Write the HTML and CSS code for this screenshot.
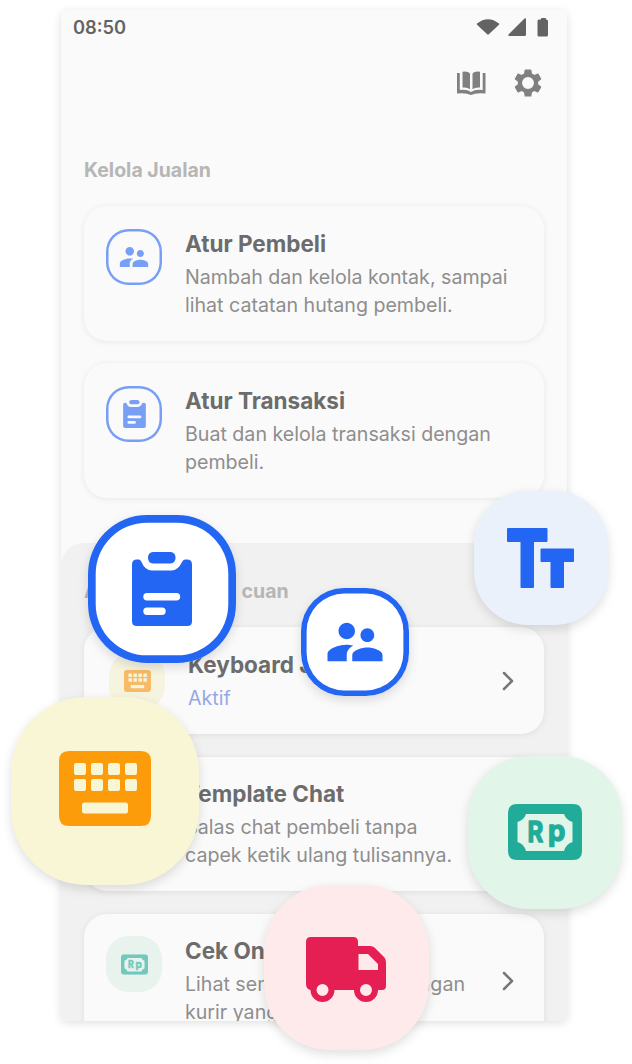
FILE: index.html
```html
<!DOCTYPE html>
<html lang="id">
<head>
<meta charset="utf-8">
<title>Kelola Jualan</title>
<link rel="stylesheet" href="styles.css">
</head>
<body>
<svg class="defs" aria-hidden="true">
  <symbol id="people" viewBox="0 0 24 24"><path d="M16.5 12c1.38 0 2.49-1.12 2.49-2.5S17.88 7 16.5 7C15.12 7 14 8.12 14 9.5s1.12 2.5 2.5 2.5zM9 11c1.66 0 2.99-1.34 2.99-3S10.66 5 9 5C7.34 5 6 6.34 6 8s1.34 3 3 3zm7.5 3c-1.83 0-5.5.92-5.5 2.75V19h11v-2.25c0-1.83-3.67-2.75-5.5-2.75zM9 13c-2.33 0-7 1.17-7 3.5V19h7v-2.25c0-.85.33-2.34 2.37-3.47C10.5 13.1 9.66 13 9 13z"/></symbol>
  <symbol id="clipboard" viewBox="0 0 60 74"><path fill-rule="evenodd" d="M21 0H38.500a5.800 5.800 0 0 1 0 11.500H21a5.800 5.800 0 0 1 0-11.500zM5 7.500H7Q8.500 7.500 9.500 10Q13 18.500 20 18.500H39.500Q46 18.500 50 10Q51 7.500 53 7.500H55Q60 7.500 60 12.500V69.500Q60 74 55 74H5Q0 74 0 69.500V12.500Q0 7.500 5 7.500zM15 41a3.700 3.700 0 0 0 0 7.400H44.500a3.700 3.700 0 0 0 0-7.400zM15 55.500a3.700 3.700 0 0 0 0 7.400H30a3.700 3.700 0 0 0 0-7.400z"/></symbol>
  <symbol id="keyboard" viewBox="0 0 92 75"><path fill-rule="evenodd" d="M10 0H82Q92 0 92 10V65Q92 75 82 75H10Q0 75 0 65V10Q0 0 10 0zM17 12a2 2 0 0 0-2 2v8a2 2 0 0 0 2 2h8a2 2 0 0 0 2-2v-8a2 2 0 0 0-2-2zM34 12a2 2 0 0 0-2 2v8a2 2 0 0 0 2 2h8a2 2 0 0 0 2-2v-8a2 2 0 0 0-2-2zM51 12a2 2 0 0 0-2 2v8a2 2 0 0 0 2 2h8a2 2 0 0 0 2-2v-8a2 2 0 0 0-2-2zM68 12a2 2 0 0 0-2 2v8a2 2 0 0 0 2 2h8a2 2 0 0 0 2-2v-8a2 2 0 0 0-2-2zM17 28a2 2 0 0 0-2 2v8a2 2 0 0 0 2 2h8a2 2 0 0 0 2-2v-8a2 2 0 0 0-2-2zM34 28a2 2 0 0 0-2 2v8a2 2 0 0 0 2 2h8a2 2 0 0 0 2-2v-8a2 2 0 0 0-2-2zM51 28a2 2 0 0 0-2 2v8a2 2 0 0 0 2 2h8a2 2 0 0 0 2-2v-8a2 2 0 0 0-2-2zM68 28a2 2 0 0 0-2 2v8a2 2 0 0 0 2 2h8a2 2 0 0 0 2-2v-8a2 2 0 0 0-2-2zM25.500 51.500a2.500 2.500 0 0 0-2.500 2.500v6a2.500 2.500 0 0 0 2.500 2.500h41a2.500 2.500 0 0 0 2.500-2.500v-6a2.500 2.500 0 0 0-2.500-2.500z"/></symbol>
  <symbol id="note" viewBox="0 0 74 56"><path fill-rule="evenodd" d="M9 0H65Q74 0 74 9V47Q74 56 65 56H9Q0 56 0 47V9Q0 0 9 0zM18 10Q16 16 9.500 18V38Q16 40 18 47H56Q58 40 64.500 38V18Q58 16 56 10z"/></symbol>
</svg>
<div class="stage">
  <main class="phone">
    <header class="status">
      <span>08:50</span>
      <svg width="74" height="22" viewBox="0 0 74 22"><path d="M1 7.500Q12-1 23 7.500Q23.500 8 23 8.800L12.500 18.500Q12 19 11.500 18.500L1 8.800Q.5 8 1 7.500zM48.500 2.500Q50 1.500 50 3.500V18.500Q50 20 48.500 20H33.500Q31.500 20 32.500 18.500zM65 3V2.500Q65 2 66 2h3q1 0 1 .7V3.500h.5q1.500 0 1.500 1.500V19q0 1.500-1.500 1.500h-7.500Q61.500 20.500 61.500 19V5q0-1.500 1.500-1.500H65z"/></svg>
    </header>
    <div class="toolbar">
      <svg width="30" height="25" viewBox="0 0 30 25"><path d="M1 2H3.800V19Q11 18 15 21Q19 18 26.700 19V2H29.500V22.500Q20 21.500 15 24Q10 21.500 1 22.500zM6.500.8Q12 0 14 2.500V18.300Q11.500 16 6.500 16.500zM24 .8Q18.500 0 16.500 2.500V18.300Q19 16 24 16.500z"/></svg>
      <svg width="34" height="34" viewBox="0 0 24 24"><path d="M19.140 12.940c.04-.3.06-.61.06-.94 0-.32-.02-.64-.07-.94l2.030-1.580c.18-.14.23-.41.12-.61l-1.920-3.320c-.12-.22-.37-.29-.59-.22l-2.390.96c-.5-.38-1.030-.7-1.620-.94l-.36-2.540c-.04-.24-.24-.41-.48-.41h-3.840c-.24 0-.43.17-.47.41l-.36 2.540c-.59.24-1.130.57-1.620.94l-2.390-.96c-.22-.08-.47 0-.59.22L2.740 8.870c-.12.21-.08.47.12.61l2.030 1.580c-.05.3-.09.63-.09.94s.02.64.07.94l-2.030 1.580c-.18.14-.23.41-.12.61l1.920 3.320c.12.22.37.29.59.22l2.390-.96c.5.38 1.030.7 1.620.94l.36 2.540c.05.24.24.41.48.41h3.840c.24 0 .44-.17.47-.41l.36-2.540c.59-.24 1.130-.56 1.620-.94l2.390.96c.22.08.47 0 .59-.22l1.920-3.320c.12-.22.07-.47-.12-.61l-2.010-1.580zM12 16.200a4.200 4.200 0 1 1 0-8.400 4.200 4.200 0 0 1 0 8.400z"/></svg>
    </div>
    <section class="group">
      <h2>Kelola Jualan</h2>
      <article class="card">
        <div class="icon outline"><svg width="34" height="34"><use href="#people"/></svg></div>
        <div class="copy"><h3>Atur Pembeli</h3><p>Nambah dan kelola kontak, sampai<br>lihat catatan hutang pembeli.</p></div>
      </article>
      <article class="card">
        <div class="icon outline"><svg width="23" height="28"><use href="#clipboard"/></svg></div>
        <div class="copy"><h3>Atur Transaksi</h3><p>Buat dan kelola transaksi dengan<br>pembeli.</p></div>
      </article>
    </section>
    <section class="group panel">
      <h2 class="split"><span>A</span><span>cuan</span></h2>
      <article class="card compact">
        <div class="icon yellow"><svg width="27" height="22"><use href="#keyboard"/></svg></div>
        <div class="copy"><h3>Keyboard J</h3><p class="active">Aktif</p></div>
        <svg class="chevron" width="12" height="20" viewBox="0 0 12 20"><path d="M2 2L10 10L2 18"/></svg>
      </article>
      <article class="card">
        <div class="icon"></div>
        <div class="copy"><h3>Template Chat</h3><p>Balas chat pembeli tanpa<br>capek ketik ulang tulisannya.</p></div>
      </article>
      <article class="card last">
        <div class="icon green"><svg width="27" height="21" viewBox="0 0 74 56"><use href="#note" width="74" height="56"/><text class="rp" transform="translate(19.500 37.500) scale(.83 1)">R</text><text class="rp" transform="translate(40 36.500) scale(.95 1)">p</text></svg></div>
        <div class="copy"><h3>Cek Ongkir</h3><p class="ends"><span>Lihat semua</span><span>dengan</span></p><p>kurir yang</p></div>
        <svg class="chevron" width="12" height="20" viewBox="0 0 12 20"><path d="M2 2L10 10L2 18"/></svg>
      </article>
    </section>
  </main>
  <div class="bubble b-clip"><svg width="60" height="74"><use href="#clipboard"/></svg></div>
  <div class="bubble b-people"><svg width="66" height="66"><use href="#people"/></svg></div>
  <div class="bubble b-type"><svg width="67" height="60" viewBox="0 0 67 60"><path d="M1 0H39.500Q40.500 0 40.500 1V13Q40.500 14 39.500 14H27V59Q27 60 26 60H14.500Q13.500 60 13.500 59V14H1Q0 14 0 13V1Q0 0 1 0zM34.500 20.500H66Q67 20.500 67 21.500V33Q67 34 66 34H57V59Q57 60 56 60H44.500Q43.500 60 43.500 59V34H34.500Q33.500 34 33.500 33V21.500Q33.500 20.500 34.500 20.500z"/></svg></div>
  <div class="bubble b-key"><svg width="92" height="75"><use href="#keyboard"/></svg></div>
  <div class="bubble b-rp"><svg width="74" height="56" viewBox="0 0 74 56"><use href="#note" width="74" height="56"/><text class="rp" transform="translate(19.500 37.500) scale(.83 1)">R</text><text class="rp" transform="translate(40 36.500) scale(.95 1)">p</text></svg></div>
  <div class="bubble b-truck"><svg width="80" height="65" viewBox="0 0 80 65"><path fill-rule="evenodd" d="M5 0H47Q52 0 52 5V9H64Q67 9 69 11L78 20Q80 22 80 25V49Q80 53 76 53H72A12 12 0 0 1 48 53H28.500A12 12 0 0 1 4.500 53Q0 52 0 47V5Q0 0 5 0zM52.500 17V33H72V27L62 17zM22.500 53a6 6 0 1 0-12 0 6 6 0 0 0 12 0zM66 53a6 6 0 1 0-12 0 6 6 0 0 0 12 0z"/></svg></div>
</div>
</body>
</html>
```
FILE: styles.css
```css
* { box-sizing: border-box; }
body { margin: 0; background: #fff; font-family: Inter, sans-serif; }
svg { display: block; flex: none; fill: currentColor; }
h2, h3, p { margin: 0; }
.defs { position: absolute; width: 0; height: 0; }
.stage { position: relative; width: 632px; height: 1064px; padding: 10px 0 0 61px; overflow: hidden; }
.phone { width: 506px; height: 1011px; overflow: hidden; border-radius: 6px; background: #fafafa; box-shadow: 0 2px 10px rgba(0,0,0,.13); }
.status { display: flex; justify-content: space-between; align-items: center; height: 34px; padding: 0 17px 0 12px; color: #636363; font-size: 18.3px; font-weight: 600; }
.toolbar { display: flex; justify-content: flex-end; align-items: center; gap: 25px; height: 78px; padding: 0 22px 0 0; color: #808080; }
.group { display: flex; flex-direction: column; gap: 22.500px; padding: 33.500px 23px 0; }
.group h2 { height: 28px; color: #b6b6b6; font-size: 19.500px; line-height: 28px; font-weight: 700; }
.card { display: flex; flex: none; height: 134.500px; padding: 22.500px 22px; gap: 23px; border-radius: 23px; background: #fafafa; box-shadow: 0 1px 6px rgba(0,0,0,.08); }
.icon { display: flex; flex: none; align-items: center; justify-content: center; width: 56px; height: 56px; border-radius: 22.500px; }
.outline { box-shadow: inset 0 0 0 2.500px #789ff6; color: #789ff6; }
.yellow { background: #f6f3df; color: #f8bb65; }
.green { background: #e8f3ed; color: #72c8bc; }
.copy { flex: 1; }
.card h3 { color: #6c6c6c; font-size: 22.500px; line-height: 30px; font-weight: 700; white-space: nowrap; }
.card p { margin-top: 4px; color: #8e8e8e; font-size: 19.620px; line-height: 28px; white-space: nowrap; }
.card p + p { margin-top: 0; }
.panel { height: 600px; margin-top: 45px; padding-top: 34px; border-radius: 23px 23px 0 0; background: #f1f1f1; }
.split { display: flex; gap: 143px; }
.compact { height: 107px; padding: 22px 30px 22px 25px; align-items: center; }
.card p.active { color: #94a8e8; }
.card.last { padding-right: 30px; }
.ends { display: flex; justify-content: space-between; width: 280px; }
.chevron { align-self: center; fill: none; stroke: #777; stroke-width: 2.500px; stroke-linecap: round; stroke-linejoin: round; }
.rp { font: 700 29px Inter, sans-serif; stroke: currentColor; stroke-width: 1.300px; stroke-linejoin: round; }
.bubble { position: absolute; display: flex; align-items: center; justify-content: center; border-radius: 40%; box-shadow: 0 4px 11px rgba(0,0,0,.13); }
.b-clip { left: 88px; top: 515px; width: 147.500px; height: 147.500px; background: #fff; color: #2466f4; box-shadow: inset 0 0 0 7.700px #2466f4, 0 4px 11px rgba(0,0,0,.13); }
.b-people { left: 301px; top: 588px; width: 108px; height: 108px; background: #fff; color: #2466f4; box-shadow: inset 0 0 0 5.600px #2466f4, 0 4px 11px rgba(0,0,0,.13); }
.b-type { left: 474px; top: 491px; width: 134px; height: 134px; padding-right: 1px; background: #eaf1fa; color: #2466f4; }
.b-key { left: 10.500px; top: 697px; width: 188px; height: 188px; padding-bottom: 5px; background: #f9f6d5; color: #fd9c0b; }
.b-rp { left: 468px; top: 755.500px; width: 153.500px; height: 153.500px; background: #e1f5e8; color: #21ac9a; }
.b-truck { left: 264px; top: 885px; width: 164.500px; height: 165px; padding-top: 4px; background: #feeaeb; color: #e51e53; }
```
